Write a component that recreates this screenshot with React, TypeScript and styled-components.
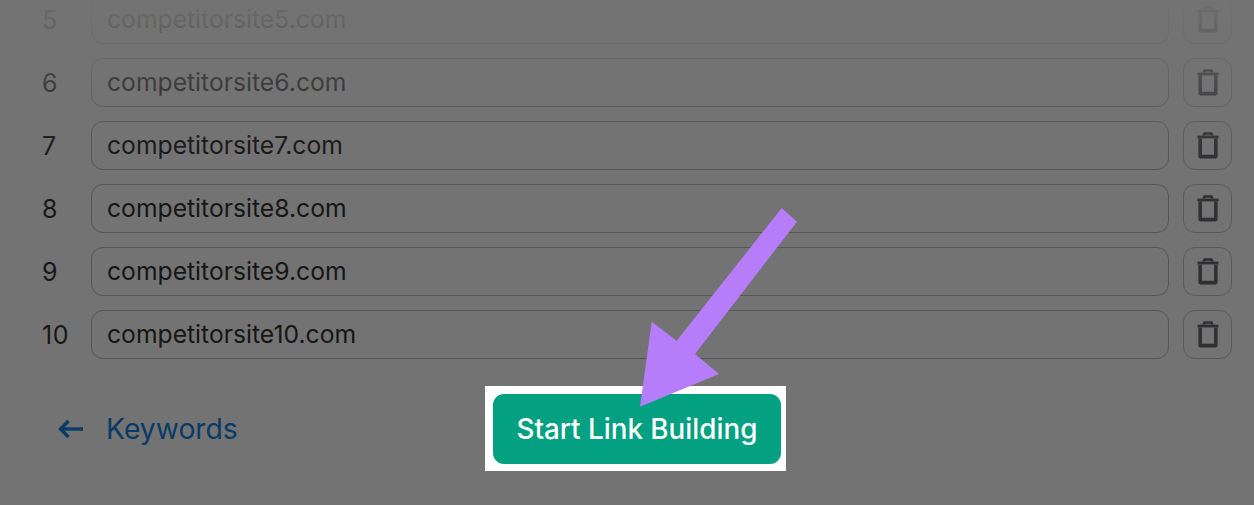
import { createGlobalStyle, styled } from 'styled-components'

const GlobalStyle = createGlobalStyle`
  html, body {
    margin: 0;
    padding: 0;
    background: #737373;
    font-family: 'Inter', 'Liberation Sans', sans-serif;
  }
`

const sites = [5, 6, 7, 8, 9, 10]

const TrashIcon = () => (
  <svg width="22" height="27" viewBox="0 0 22 27" fill="none" stroke="#303033" strokeWidth="3.6">
    <path d="M3.2 6.5V24.6H18.8V6.5" strokeLinejoin="round" />
    <path d="M0.5 5H21.5" strokeWidth="2.8" />
    <path d="M6.5 3.5L7.5 1.5H14.5L15.5 3.5" strokeWidth="2.6" />
  </svg>
)

export default function App() {
  return (
    <>
      <GlobalStyle />
      <Page>
        <SiteList>
          {sites.map((n) => (
            <SiteRow key={n}>
              <RowNumber>{n}</RowNumber>
              <SiteInput>competitorsite{n}.com</SiteInput>
              <TrashButton>
                <TrashIcon />
              </TrashButton>
            </SiteRow>
          ))}
        </SiteList>
        <FadeOverlay />
        <Footer>
          <BackLink>
            <svg width="26" height="20" viewBox="0 0 26 20" fill="none" stroke="#0a3a66" strokeWidth="3.4">
              <path d="M25 10H3" />
              <path d="M10.5 2L2.5 10L10.5 18" />
            </svg>
            Keywords
          </BackLink>
          <ButtonFrame>
            <StartButton>Start Link Building</StartButton>
          </ButtonFrame>
        </Footer>
        <ArrowOverlay width="1254" height="505" viewBox="0 0 1254 505">
          <polygon
            points="781.7,208 797,221.7 695,354 719,374 640,406.7 651.7,321.7 676.7,340.7"
            fill="#b67dfb"
          />
        </ArrowOverlay>
      </Page>
    </>
  )
}

const Page = styled.div`
  position: relative;
  width: 1254px;
  height: 505px;
  overflow: hidden;
  background: #737373;
`

const SiteList = styled.div`
  display: flex;
  flex-direction: column;
  gap: 14px;
  margin-top: -5px;
  padding: 0 22px 0 42px;
`

const SiteRow = styled.div`
  display: flex;
  align-items: center;
  height: 49px;
`

const RowNumber = styled.div`
  width: 49px;
  font-size: 25px;
  letter-spacing: 0.6px;
  color: #181818;
`

const SiteInput = styled.div`
  flex: 1;
  box-sizing: border-box;
  height: 49px;
  display: flex;
  align-items: center;
  padding: 0 0 2px 15px;
  border: 1px solid #565656;
  border-radius: 12px;
  font-size: 24.7px;
  color: #161616;
`

const TrashButton = styled.div`
  box-sizing: border-box;
  width: 49px;
  height: 49px;
  margin-left: 14px;
  display: flex;
  align-items: center;
  justify-content: center;
  border: 1px solid #5a5a5a;
  border-radius: 12px;
`

const FadeOverlay = styled.div`
  position: absolute;
  top: 0;
  left: 0;
  right: 0;
  height: 170px;
  background: linear-gradient(
    to bottom,
    rgba(115, 115, 115, 0.92) 0,
    rgba(115, 115, 115, 0.85) 20px,
    rgba(115, 115, 115, 0.42) 82px,
    rgba(115, 115, 115, 0.06) 145px,
    rgba(115, 115, 115, 0) 170px
  );
`

const Footer = styled.div`
  display: grid;
  grid-template-columns: 485px auto;
  align-items: center;
  margin-top: 27px;
`

const BackLink = styled.div`
  display: flex;
  align-items: center;
  gap: 22px;
  padding-left: 58px;
  padding-top: 1px;
  font-size: 28.3px;
  color: #0a3a66;
`

const ButtonFrame = styled.div`
  width: 301px;
  height: 85px;
  box-sizing: border-box;
  padding: 8px 5px 7px 8px;
  background: #ffffff;
`

const StartButton = styled.div`
  height: 100%;
  display: flex;
  align-items: center;
  justify-content: center;
  border-radius: 11px;
  background: #03a082;
  color: #ffffff;
  font-size: 27.8px;
  font-weight: 550;
`

const ArrowOverlay = styled.svg`
  position: absolute;
  top: 0;
  left: 0;
`
